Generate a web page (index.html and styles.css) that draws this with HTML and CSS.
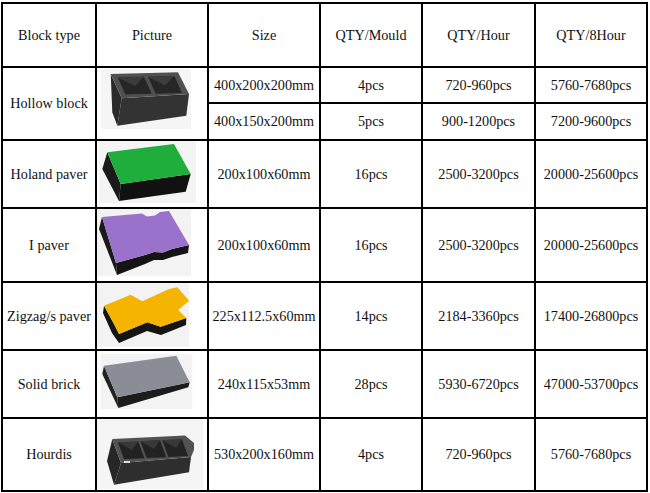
FILE: index.html
```html
<!DOCTYPE html>
<html>
<head>
<meta charset="utf-8">
<title>Block types</title>
<link rel="stylesheet" href="styles.css">
</head>
<body>
<div class="sheet">
  <div class="c">Block type</div>
  <div class="c">Picture</div>
  <div class="c">Size</div>
  <div class="c">QTY/Mould</div>
  <div class="c">QTY/Hour</div>
  <div class="c">QTY/8Hour</div>

  <div class="c span2">Hollow block</div>
  <div class="c pic span2">
    <svg width="110" height="71" viewBox="0 0 110 71">
      <rect x="4" y="1" width="90" height="60" fill="#f5f5f5"/>
      <polygon points="13.7,6 24.7,30.3 20.3,57.7 15.3,44.3" fill="#2a2a2a"/>
      <polygon points="24.7,30.3 92,26 89.3,47.7 20.3,57.7" fill="#333"/>
      <polygon points="13.7,6 81,4.3 92,26 24.7,30.3" fill="#505050"/>
      <polygon points="20.7,9.5 47,8.85 54.7,25.85 28.4,26.5" fill="#262626"/>
      <polygon points="20.7,9.5 47,8.85 38,18" fill="#3c3c3c"/>
      <polygon points="51,8.75 77.3,8.1 85,25.1 58.7,25.75" fill="#262626"/>
      <polygon points="51,8.75 77.3,8.1 68,17.5" fill="#3c3c3c"/>
    </svg>
  </div>
  <div class="c">400x200x200mm</div>
  <div class="c">4pcs</div>
  <div class="c">720-960pcs</div>
  <div class="c">5760-7680pcs</div>
  <div class="c">400x150x200mm</div>
  <div class="c">5pcs</div>
  <div class="c">900-1200pcs</div>
  <div class="c">7200-9600pcs</div>

  <div class="c">Holand paver</div>
  <div class="c pic">
    <svg width="110" height="66" viewBox="0 0 110 66">
      <rect x="2" y="0" width="97" height="62" fill="#f4f4f4"/>
      <polygon points="10.3,11.3 23.7,43 22,60 5.3,28" fill="#1a1a1a"/>
      <polygon points="23.7,43 93.7,33 88.7,50.7 22,60" fill="#111"/>
      <polygon points="10.3,11.3 77,3 93.7,33 23.7,43" fill="#1fae3c"/>
    </svg>
  </div>
  <div class="c">200x100x60mm</div>
  <div class="c">16pcs</div>
  <div class="c">2500-3200pcs</div>
  <div class="c">20000-25600pcs</div>

  <div class="c">I paver</div>
  <div class="c pic">
    <svg width="110" height="72" viewBox="0 0 110 72">
      <rect x="0" y="0" width="94" height="67" fill="#f3f3f3"/>
      <polygon points="5,8 19,54 20,66 2,20" fill="#1a1a1a"/>
      <polygon points="19,54 48,46 57,43 66,43.5 75,40 92,36 91,44 75,48 66,51 57,51 48,55 20,66" fill="#141414"/>
      <polygon points="5,8 45,4.5 50,7.5 58,6.5 63,3 72,2 92,36 75,40 66,43.5 57,43 48,46 19,54" fill="#9a72cc"/>
    </svg>
  </div>
  <div class="c">200x100x60mm</div>
  <div class="c">16pcs</div>
  <div class="c">2500-3200pcs</div>
  <div class="c">20000-25600pcs</div>

  <div class="c">Zigzag/s paver</div>
  <div class="c pic">
    <svg width="110" height="66" viewBox="0 0 110 66">
      <rect x="0" y="0" width="92" height="64" fill="#f3f3f3"/>
      <polygon points="7,22.7 17,41 22,51 50.3,39.3 63.7,43.7 89.3,35 89,42 64,52 50,48 22,60 15,50 6,30" fill="#151515"/>
      <polygon points="7,22.7 33.7,11.7 45.3,18.3 72,6 80.3,4.3 92,17.7 81.3,27 89.3,35 63.7,43.7 50.3,39.3 22,51 17,41" fill="#f5b400"/>
    </svg>
  </div>
  <div class="c">225x112.5x60mm</div>
  <div class="c">14pcs</div>
  <div class="c">2184-3360pcs</div>
  <div class="c">17400-26800pcs</div>

  <div class="c">Solid brick</div>
  <div class="c pic">
    <svg width="110" height="66" viewBox="0 0 110 66">
      <rect x="3.7" y="3" width="91.6" height="55" fill="#f3f3f3"/>
      <polygon points="7,14.7 20.3,46.3 21.3,57 5.3,23" fill="#222"/>
      <polygon points="20.3,46.3 92.7,31.3 91.3,36.3 21.3,57" fill="#1c1c1c"/>
      <polygon points="7,14.7 79.3,4.7 92.7,31.3 20.3,46.3" fill="#8b8d96"/>
    </svg>
  </div>
  <div class="c">240x115x53mm</div>
  <div class="c">28pcs</div>
  <div class="c">5930-6720pcs</div>
  <div class="c">47000-53700pcs</div>

  <div class="c">Hourdis</div>
  <div class="c pic">
    <svg width="110" height="71" viewBox="0 0 110 71">
      <rect x="0" y="0" width="106" height="70" fill="#f5f5f5"/>
      <polygon points="15.3,20 24,44 17,65.7 10,42" fill="#262626"/>
      <polygon points="24,44 94,38 92,53.3 17,65.7" fill="#2e2e2e"/>
      <polygon points="15.3,20 88,16.5 97,24 97,31 94,38 24,44" fill="#525252"/>
      <polygon points="20.96,23.39 41.3,22.41 47.4,39.21 27.06,40.19" fill="#222"/>
      <polygon points="20.96,23.39 41.3,22.41 35,31" fill="#383838"/>
      <polygon points="43.5,22.3 63.1,21.36 69.2,38.16 49.6,39.1" fill="#222"/>
      <polygon points="43.5,22.3 63.1,21.36 57,30" fill="#383838"/>
      <polygon points="65.3,21.25 84.9,20.31 91,37.11 71.4,38.05" fill="#222"/>
      <polygon points="65.3,21.25 84.9,20.31 79,29" fill="#383838"/>
      <rect x="27" y="42" width="6" height="2" fill="#ddd"/>
    </svg>
  </div>
  <div class="c">530x200x160mm</div>
  <div class="c">4pcs</div>
  <div class="c">720-960pcs</div>
  <div class="c">5760-7680pcs</div>
</div>
</body>
</html>
```

FILE: styles.css
```css
html, body {
  margin: 0;
  padding: 0;
  background: #fff;
}

body {
  font-family: "Liberation Serif", "Times New Roman", serif;
  font-size: 14.2px;
  color: #111;
}

.sheet {
  display: grid;
  grid-template-columns: 92px 110px 110px 100px 111px 110px;
  grid-template-rows: 62px 34px 35px 66px 72px 66px 66px 71px;
  gap: 2px;
  padding: 2px;
  background: #000;
  width: max-content;
  margin: 2px 0 0 1px;
}

.c {
  background: #fff;
  display: flex;
  align-items: center;
  justify-content: center;
  text-align: center;
  white-space: nowrap;
}

.span2 {
  grid-row: span 2;
}

.pic {
  align-items: stretch;
  justify-content: flex-start;
}

.pic svg {
  display: block;
}
```
